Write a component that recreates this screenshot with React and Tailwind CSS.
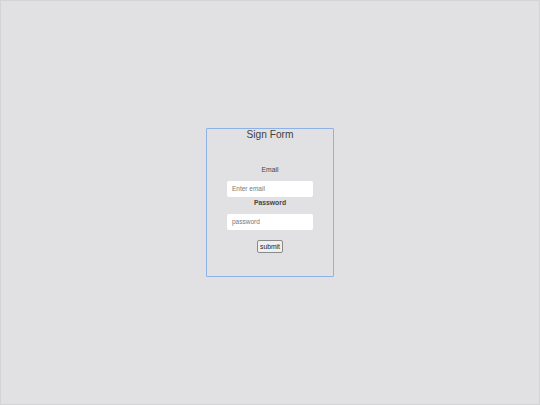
export default function App() {
  return (
    <div
      className="w-[540px] h-[405px] bg-[#e1e0e3] border border-[#d4d3d6] flex items-center justify-center"
      style={{ fontFamily: '"Liberation Sans", Arial, sans-serif' }}
    >
      <div className="w-[128px] h-[149px] border border-[#8fb2e6] rounded-[1px] flex flex-col items-center">
        <div className="text-[10.2px] leading-[12px] text-[#444] mt-[0px]">Sign Form</div>
        <div className="text-[6.8px] leading-[8px] text-[#444] mt-[25px]">Email</div>
        <div className="w-[86px] h-[16px] bg-white rounded-[2px] mt-[7px] flex items-center px-[5px] text-[6.5px] text-[#777]">
          Enter email
        </div>
        <div className="text-[6.8px] leading-[8px] font-bold text-[#444] mt-[2px]">Password</div>
        <div className="w-[86px] h-[16px] bg-white rounded-[2px] mt-[7px] flex items-center px-[5px] text-[6.5px] text-[#777]">
          password
        </div>
        <div className="mt-[10px] h-[13px] px-[2px] border border-[#8a8a8a] bg-[#efefef] rounded-[2px] text-[6.8px] leading-[11px] text-[#222]">
          submit
        </div>
      </div>
    </div>
  );
}
